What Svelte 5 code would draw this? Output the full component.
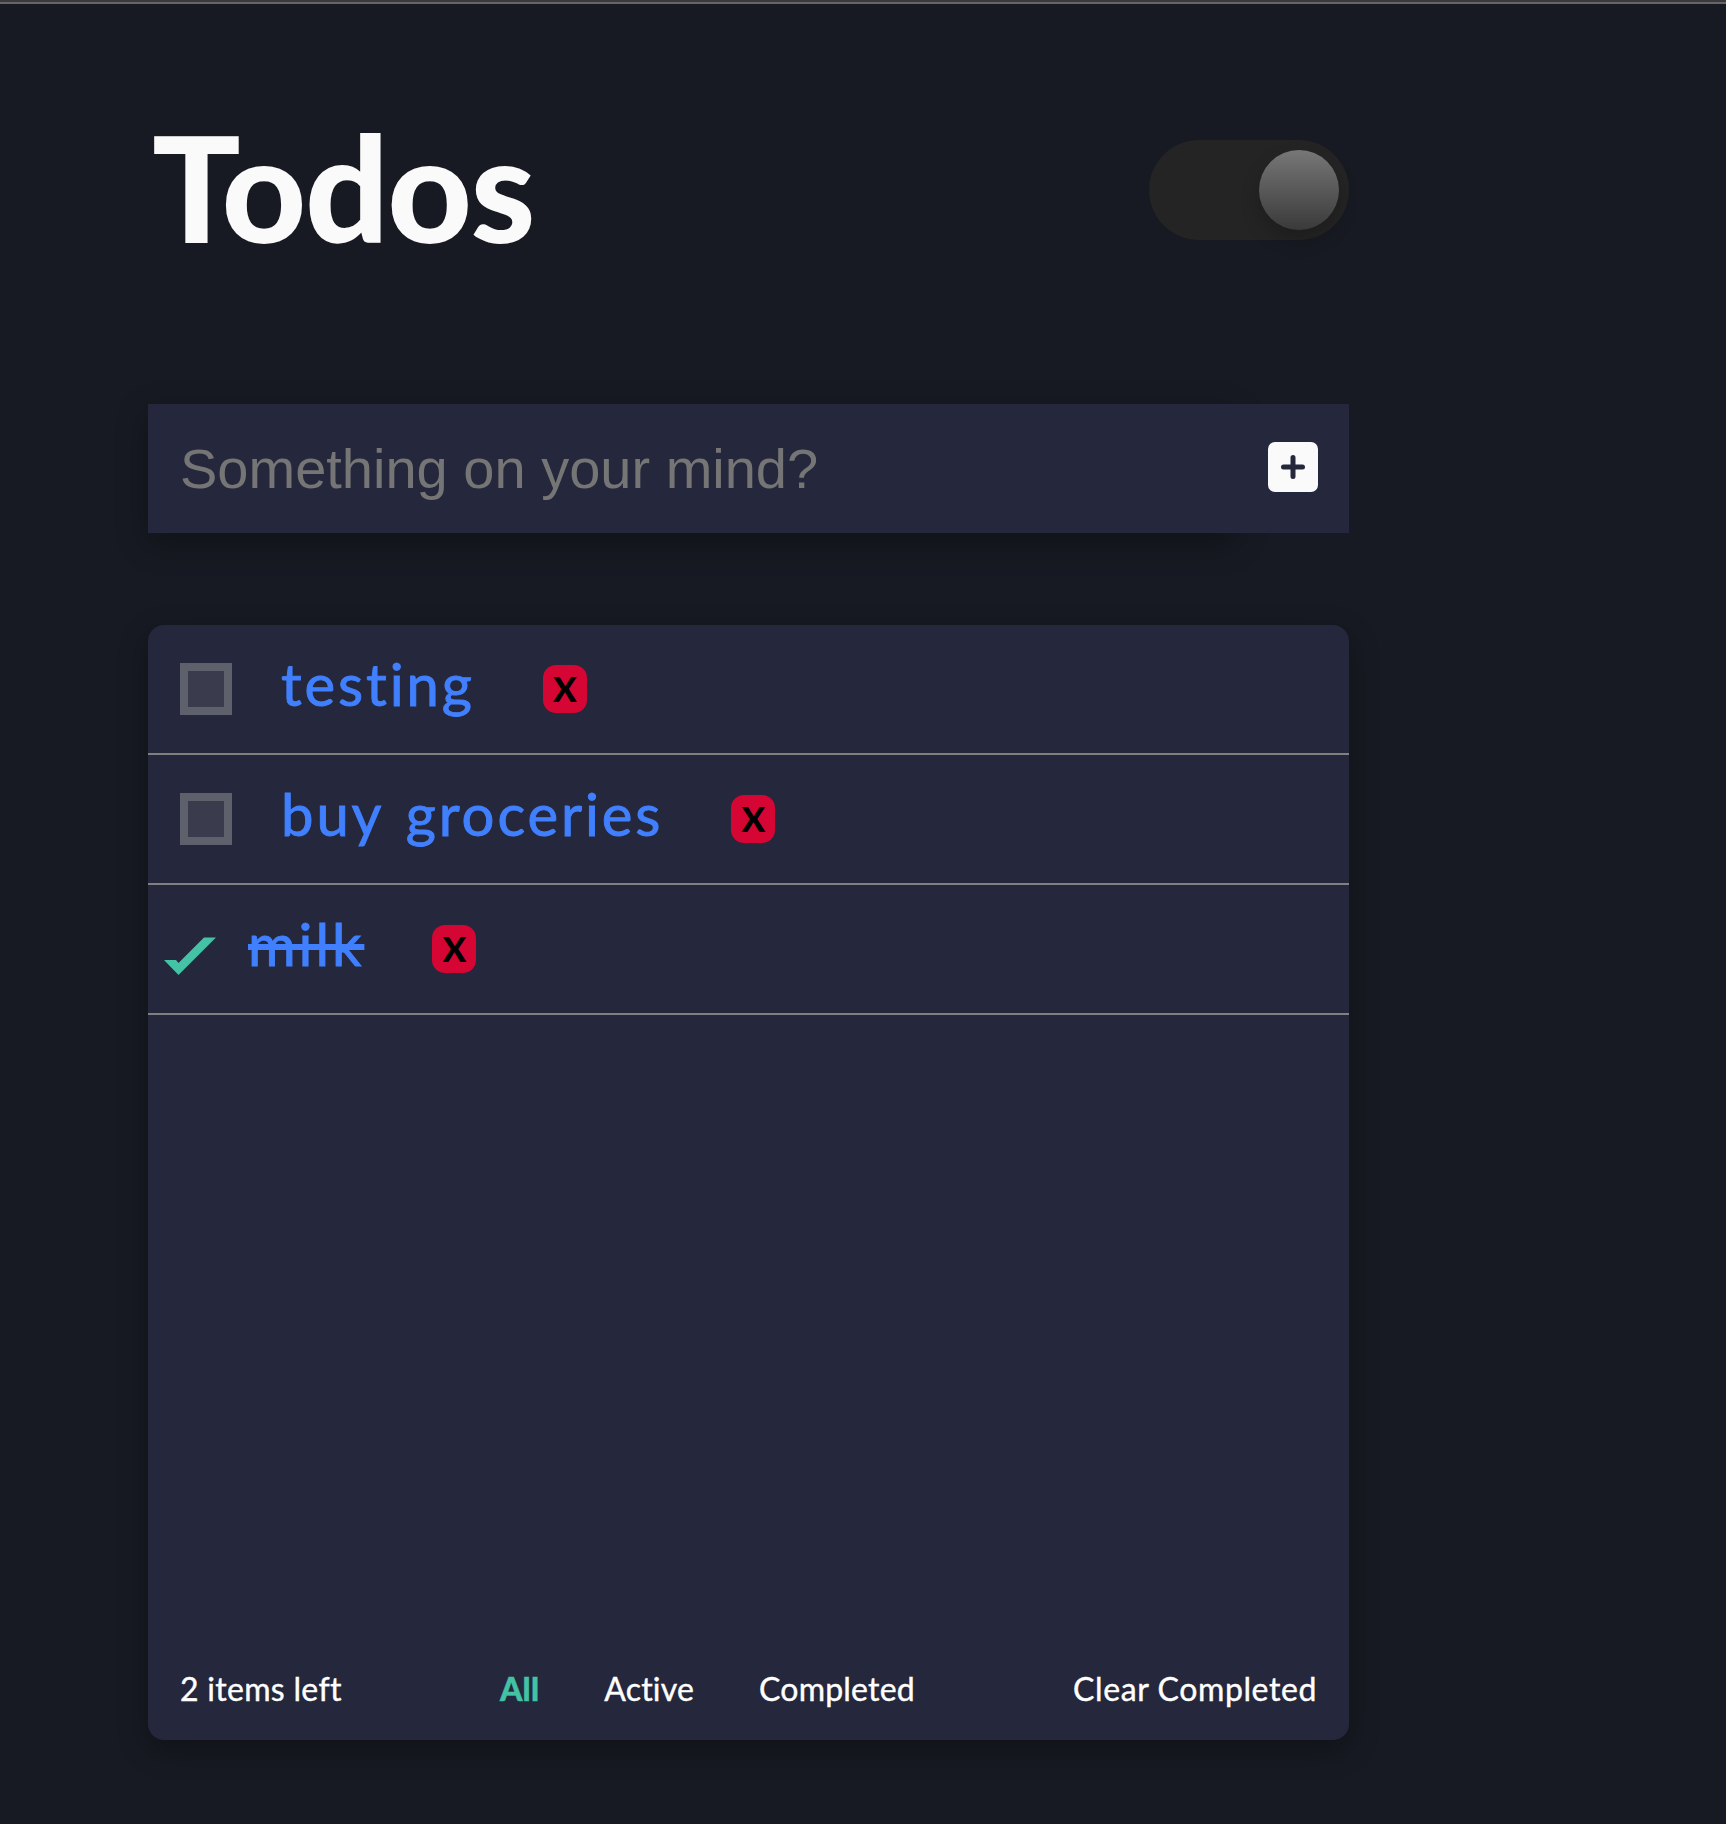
<script>
  let todos = $state([
    { text: 'testing', done: false },
    { text: 'buy groceries', done: false },
    { text: 'milk', done: true }
  ]);
  let filter = $state('All');
  let draft = $state('');

  const filters = ['All', 'Active', 'Completed'];
  let left = $derived(todos.filter((t) => !t.done).length);
  let shown = $derived(
    todos.filter((t) => filter === 'All' || t.done === (filter === 'Completed'))
  );

  function add(event) {
    event.preventDefault();
    if (draft.trim()) todos.push({ text: draft.trim(), done: false });
    draft = '';
  }
  function remove(todo) {
    todos = todos.filter((t) => t !== todo);
  }
  function clearCompleted() {
    todos = todos.filter((t) => !t.done);
  }
</script>

<div class="page">
  <div class="topline"></div>
  <main>
    <header>
      <h1>Todos</h1>
      <button class="toggle" aria-label="Toggle theme"><span class="knob"></span></button>
    </header>

    <form onsubmit={add}>
      <input bind:value={draft} placeholder="Something on your mind?" />
      <button class="add" aria-label="Add">
        <svg viewBox="0 0 50 50">
          <rect width="50" height="50" rx="7" fill="#fafafa" />
          <path d="M25 15.500v19M15.500 25h19" stroke="#25273c" stroke-width="5" stroke-linecap="round" />
        </svg>
      </button>
    </form>

    <section>
      <ul>
        {#each shown as todo}
          <li class:done={todo.done}>
            <button class="mark" aria-label="Toggle item" onclick={() => (todo.done = !todo.done)}>
              {#if todo.done}
                <svg class="check" viewBox="0 0 52 38"><path d="M0 23H12L14.500 26L40 .5H52L14.500 38Z" fill="#44c2a5" /></svg>
              {:else}
                <span class="box"></span>
              {/if}
            </button>
            <span class="label">{todo.text}</span>
            <button class="del" onclick={() => remove(todo)}>X</button>
          </li>
        {/each}
      </ul>
      <footer>
        <span class="count">{left} items left</span>
        <nav>
          {#each filters as name}
            <button class:active={filter === name} onclick={() => (filter = name)}>{name}</button>
          {/each}
        </nav>
        <button class="clear" onclick={clearCompleted}>Clear Completed</button>
      </footer>
    </section>
  </main>
</div>

<style>
  :global(body) {
    margin: 0;
    background: #171a22;
  }
  .page {
    height: 1824px;
    overflow: hidden;
    font-family: Lato, sans-serif;
    color: #fff;
  }
  button {
    padding: 0;
    border: 0;
    background: none;
    color: inherit;
    font: inherit;
    letter-spacing: inherit;
  }
  .topline {
    height: 2px;
    background: #3a3a3a;
    border-bottom: 2px solid #66666a;
  }
  main {
    width: 1201px;
    margin-left: 148px;
  }
  header {
    display: flex;
    justify-content: space-between;
    align-items: flex-start;
    box-sizing: border-box;
    height: 400px;
    padding-top: 136px;
  }
  h1 {
    margin: -4px 0 0 4px;
    font-size: 147px;
    font-weight: 900;
    line-height: 100px;
    letter-spacing: -1.6px;
    color: #fafafa;
  }
  .toggle {
    display: flex;
    justify-content: flex-end;
    box-sizing: border-box;
    width: 200px;
    height: 100px;
    padding: 10px;
    border-radius: 50px;
    background: #242424;
  }
  .knob {
    width: 80px;
    height: 80px;
    border-radius: 50%;
    background: linear-gradient(#777, #3a3a3a);
    box-shadow: 0 10px 20px rgba(0, 0, 0, 0.2);
  }
  form {
    display: flex;
    height: 129px;
  }
  input {
    box-sizing: border-box;
    width: 1087px;
    padding: 0 32px;
    border: 0;
    border-radius: 0;
    outline: 0;
    background: #25273c;
    color: #fff;
    font: 56px 'Liberation Sans', sans-serif;
    box-shadow: 0 10px 30px rgba(0, 0, 0, 0.3);
  }
  input::placeholder {
    color: #757575;
  }
  .add {
    z-index: 1;
    display: flex;
    flex: 1;
    justify-content: flex-end;
    align-items: center;
    padding: 0 31.5px 3px 0;
    background: #25273c;
  }
  .add svg {
    width: 50px;
    height: 50px;
  }
  section {
    display: flex;
    flex-direction: column;
    height: 1115px;
    margin-top: 92px;
    border-radius: 16px;
    background: #25273c;
    box-shadow: 0 10px 30px rgba(0, 0, 0, 0.3);
  }
  ul {
    flex: 1;
    margin: 0;
    padding: 0;
    list-style: none;
  }
  li {
    display: flex;
    align-items: center;
    box-sizing: border-box;
    height: 130px;
    padding-left: 32px;
    border-bottom: 2px solid #808080;
  }
  .mark {
    display: flex;
    width: 52px;
    margin-right: 49px;
  }
  .box {
    box-sizing: border-box;
    width: 52px;
    height: 52px;
    border: 8px solid #5e606c;
    background: #3a3b4c;
  }
  .check {
    width: 52px;
    height: 38px;
    margin-top: 14px;
  }
  .label {
    margin-right: 68px;
    padding-bottom: 11px;
    color: #4080ff;
    font-size: 58px;
    letter-spacing: 2.9px;
    word-spacing: 5px;
    -webkit-text-stroke: 0.9px #4080ff;
  }
  .done {
    padding-left: 16px;
  }
  .done .mark {
    margin-right: 32px;
  }
  .done .label {
    text-decoration: line-through;
    text-decoration-thickness: 6px;
  }
  .del {
    width: 44px;
    height: 48px;
    border-radius: 13px;
    background: #d50534;
    color: #000;
    font-size: 35px;
    font-weight: 900;
    line-height: 44px;
    padding-bottom: 2px;
  }
  footer {
    display: flex;
    justify-content: space-between;
    align-items: center;
    height: 104px;
    padding: 0 32px;
    font-size: 32px;
    letter-spacing: 0.3px;
    -webkit-text-stroke: 0.4px currentColor;
  }
  nav {
    display: flex;
    gap: 65px;
    letter-spacing: 0.2px;
  }
  .clear {
    letter-spacing: 0.6px;
  }
  .active {
    color: #44c2a5;
    font-weight: 900;
  }
</style>
